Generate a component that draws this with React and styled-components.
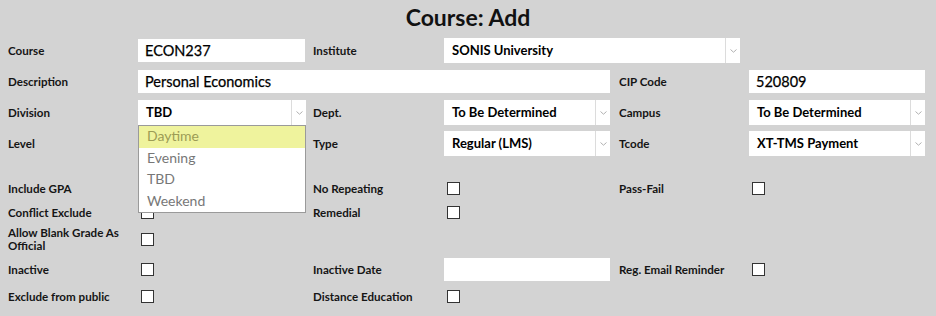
import styled, {createGlobalStyle} from "styled-components";

const GlobalStyle = createGlobalStyle`
    body {
        margin: 0;
        background: #d3d3d3;
        font-family: Lato, "Noto Sans", sans-serif;
        color: #111;
    }
`

const Page = styled.div`
    width: 936px;
    height: 316px;
    background: #d3d3d3;
    overflow: hidden;
`
const Title = styled.h1`
    margin: 0;
    height: 34px;
    line-height: 34px;
    text-align: center;
    font-size: 23px;
    font-weight: 700;
    color: #111;
`
const Grid = styled.div`
    display: grid;
    grid-template-columns: 130px 175px 131px 175px 130px 177px;
    grid-auto-rows: ${p => p.rows || "25px"};
    grid-template-rows: ${p => p.template || "none"};
    row-gap: ${p => p.gap || 0}px;
    padding-left: 8px;
    margin-top: ${p => p.top || 0}px;
    align-items: center;
`
const Label = styled.label`
    font-size: 11.6px;
    font-weight: 700;
    line-height: 13px;
    color: #151515;
    padding-right: 8px;
`
const Field = styled.div`
    grid-column: span ${p => p.span || 1};
    width: ${p => p.w}px;
    position: relative;
`
const TextBox = styled.div`
    height: 23px;
    background: #fff;
    font-size: 14.5px;
    font-weight: 400;
    line-height: 23px;
    padding-left: 7px;
    color: #000;
    white-space: nowrap;
    -webkit-text-stroke: 0.25px #000;
`
const SelectBox = styled.div`
    display: flex;
    height: 25px;
    background: #fff;
    color: #000;
`
const SelectValue = styled.div`
    flex: 1;
    font-size: 13px;
    font-weight: 700;
    line-height: 25px;
    padding-left: 8px;
    white-space: nowrap;
`
const Arrow = styled.div`
    width: 14px;
    border-left: 1px solid #dcdcdc;
    display: flex;
    align-items: center;
    justify-content: center;
`
const Menu = styled.ul`
    position: absolute;
    top: 100%;
    left: 0;
    width: 100%;
    box-sizing: border-box;
    margin: 0;
    padding: 0;
    list-style: none;
    background: #fff;
    border: 1px solid #9a9a9a;
    z-index: 5;
`
const MenuItem = styled.li`
    height: 21.5px;
    line-height: 20px;
    padding-left: 8px;
    font-size: 14px;
    color: ${p => p.active ? "#9c9c55" : "#777"};
    background: ${p => p.active ? "#eff39d" : "transparent"};
`
const Check = styled.input.attrs({type: "checkbox"})`
    appearance: none;
    width: 13px;
    height: 13px;
    margin: 0 0 0 3px;
    border: 1px solid #333;
    background: #fff;
    box-sizing: border-box;
    display: block;
`

function Chevron() {
    return (
        <svg width="7" height="4" viewBox="0 0 7 4">
            <polyline points="0.5,0.5 3.5,3.2 6.5,0.5" fill="none" stroke="#b0b0b0" strokeWidth="1"/>
        </svg>
    )
}

function Select({value}) {
    return (
        <SelectBox>
            <SelectValue>{value}</SelectValue>
            <Arrow><Chevron/></Arrow>
        </SelectBox>
    )
}

const divisions = ["Daytime", "Evening", "TBD", "Weekend"]

export default function App() {
    return (
        <Page>
            <GlobalStyle/>
            <Title>Course: Add</Title>
            <Grid gap={6} top={4}>
                <Label>Course</Label>
                <Field w={167}><TextBox>ECON237</TextBox></Field>
                <Label>Institute</Label>
                <Field span={2} w={296}><Select value="SONIS University"/></Field>
                <div/>

                <Label>Description</Label>
                <Field span={3} w={472}><TextBox>Personal Economics</TextBox></Field>
                <Label>CIP Code</Label>
                <Field w={176}><TextBox>520809</TextBox></Field>

                <Label>Division</Label>
                <Field w={168}>
                    <Select value="TBD"/>
                    <Menu>
                        {divisions.map((d, i) => (
                            <MenuItem key={d} active={i === 0}>{d}</MenuItem>
                        ))}
                    </Menu>
                </Field>
                <Label>Dept.</Label>
                <Field w={166}><Select value="To Be Determined"/></Field>
                <Label>Campus</Label>
                <Field w={176}><Select value="To Be Determined"/></Field>

                <Label>Level</Label>
                <div/>
                <Label>Type</Label>
                <Field w={166}><Select value="Regular (LMS)"/></Field>
                <Label>Tcode</Label>
                <Field w={176}><Select value="XT-TMS Payment"/></Field>
            </Grid>
            <Grid template="24px 24px 30px 30px 24px" top={20}>
                <Label>Include GPA</Label>
                <Check/>
                <Label>No Repeating</Label>
                <Check/>
                <Label>Pass-Fail</Label>
                <Check/>

                <Label>Conflict Exclude</Label>
                <Check/>
                <Label>Remedial</Label>
                <Check/>
                <div/>
                <div/>

                <Label>Allow Blank Grade As Official</Label>
                <Check/>
                <div/>
                <div/>
                <div/>
                <div/>

                <Label>Inactive</Label>
                <Check/>
                <Label>Inactive Date</Label>
                <Field w={166}><TextBox/></Field>
                <Label>Reg. Email Reminder</Label>
                <Check/>

                <Label>Exclude from public</Label>
                <Check/>
                <Label>Distance Education</Label>
                <Check/>
            </Grid>
        </Page>
    )
}
